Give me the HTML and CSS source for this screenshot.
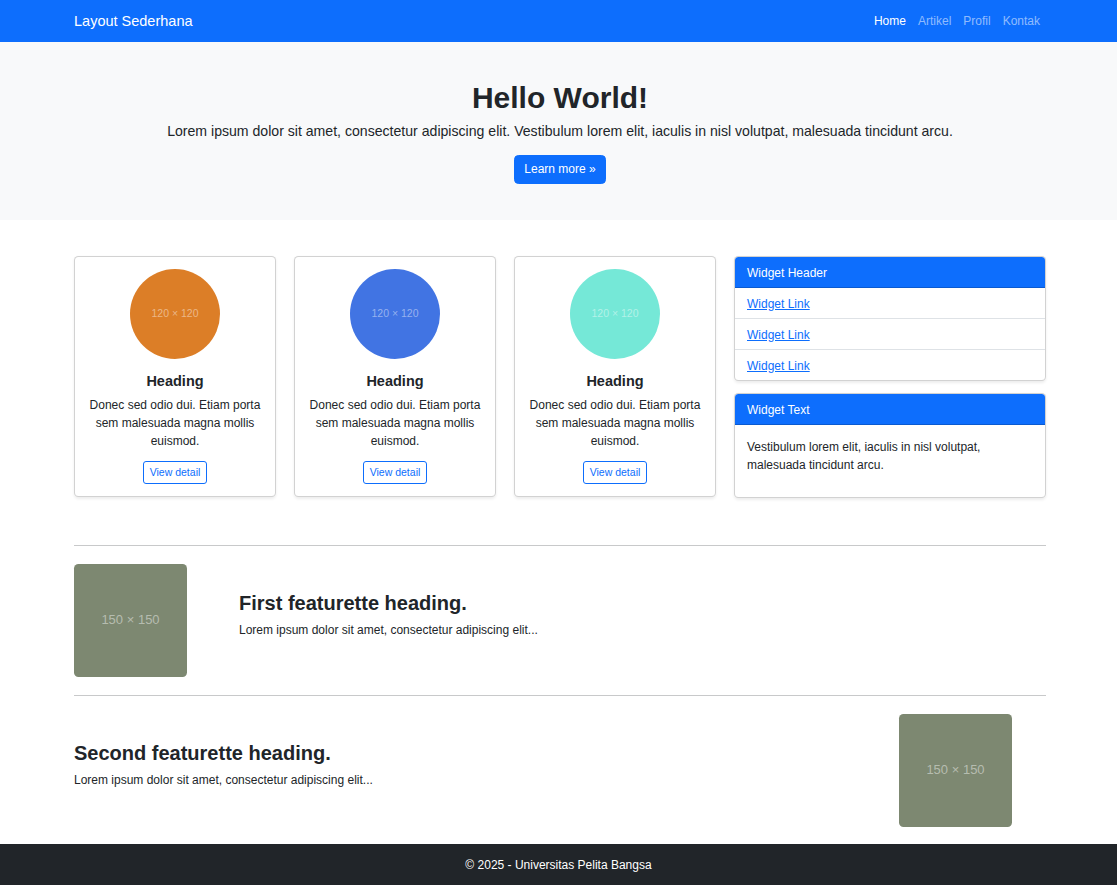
FILE: index.html
```html
<!DOCTYPE html>
<html lang="id">
<head>
<meta charset="utf-8">
<title>Layout Sederhana</title>
<link rel="stylesheet" href="styles.css">
</head>
<body>
<nav class="navbar">
  <div class="container nav-inner">
    <a class="brand" href="#">Layout Sederhana</a>
    <ul class="nav-links">
      <li><a class="nav-link active" href="#">Home</a></li>
      <li><a class="nav-link" href="#">Artikel</a></li>
      <li><a class="nav-link" href="#">Profil</a></li>
      <li><a class="nav-link" href="#">Kontak</a></li>
    </ul>
  </div>
</nav>

<header class="hero">
  <div class="container">
    <h1 class="hero-title">Hello World!</h1>
    <p class="lead">Lorem ipsum dolor sit amet, consectetur adipiscing elit. Vestibulum lorem elit, iaculis in nisl volutpat, malesuada tincidunt arcu.</p>
    <a class="btn btn-primary" href="#">Learn more »</a>
  </div>
</header>

<main class="container main">
  <div class="top-row">
    <div class="cards">
      <div class="card card-feature">
        <div class="circle circle-orange">120 × 120</div>
        <h5 class="card-heading">Heading</h5>
        <p class="card-text">Donec sed odio dui. Etiam porta sem malesuada magna mollis euismod.</p>
        <a class="btn btn-outline" href="#">View detail</a>
      </div>
      <div class="card card-feature">
        <div class="circle circle-blue">120 × 120</div>
        <h5 class="card-heading">Heading</h5>
        <p class="card-text">Donec sed odio dui. Etiam porta sem malesuada magna mollis euismod.</p>
        <a class="btn btn-outline" href="#">View detail</a>
      </div>
      <div class="card card-feature">
        <div class="circle circle-teal">120 × 120</div>
        <h5 class="card-heading">Heading</h5>
        <p class="card-text">Donec sed odio dui. Etiam porta sem malesuada magna mollis euismod.</p>
        <a class="btn btn-outline" href="#">View detail</a>
      </div>
    </div>
    <aside class="sidebar">
      <div class="card widget">
        <div class="card-header">Widget Header</div>
        <ul class="list-group">
          <li class="list-item"><a href="#">Widget Link</a></li>
          <li class="list-item"><a href="#">Widget Link</a></li>
          <li class="list-item"><a href="#">Widget Link</a></li>
        </ul>
      </div>
      <div class="card widget">
        <div class="card-header">Widget Text</div>
        <div class="card-body">
          <p>Vestibulum lorem elit, iaculis in nisl volutpat, malesuada tincidunt arcu.</p>
        </div>
      </div>
    </aside>
  </div>

  <hr class="divider divider-first">

  <section class="featurette">
    <div class="placeholder">150 × 150</div>
    <div class="feat-text">
      <h2 class="feat-heading">First featurette heading.</h2>
      <p>Lorem ipsum dolor sit amet, consectetur adipiscing elit...</p>
    </div>
  </section>

  <hr class="divider">

  <section class="featurette featurette-reverse">
    <div class="feat-text">
      <h2 class="feat-heading">Second featurette heading.</h2>
      <p>Lorem ipsum dolor sit amet, consectetur adipiscing elit...</p>
    </div>
    <div class="placeholder">150 × 150</div>
  </section>
</main>

<footer class="footer">
  <p>© 2025 - Universitas Pelita Bangsa</p>
</footer>
</body>
</html>
```
FILE: styles.css
```css
* { box-sizing: border-box; }

html, body {
  margin: 0;
  padding: 0;
}

body {
  font-family: "Liberation Sans", Arial, sans-serif;
  font-size: 12px;
  line-height: 1.5;
  color: #212529;
  background: #fff;
}

.container {
  box-sizing: content-box;
  width: 972px;
  margin: 0 auto;
  padding-left: 3px;
}

/* Navbar */
.navbar {
  background: #0d6efd;
  height: 42px;
}
.nav-inner {
  height: 42px;
  display: flex;
  align-items: center;
  justify-content: space-between;
}
.brand {
  color: #fff;
  text-decoration: none;
  font-size: 14.5px;
  line-height: 1;
}
.nav-links {
  list-style: none;
  display: flex;
  margin: 0;
  padding: 0;
}
.nav-link {
  display: block;
  padding: 0 6px;
  color: rgba(255, 255, 255, 0.55);
  text-decoration: none;
  font-size: 12px;
}
.nav-link.active { color: #fff; }

/* Hero */
.hero {
  background: #f8f9fa;
  padding: 36px 0;
  text-align: center;
}
.hero-title {
  margin: 2px 0 4px;
  font-size: 30px;
  font-weight: 700;
  line-height: 36px;
}
.lead {
  margin: 0 0 12px;
  font-size: 14.1px;
  font-weight: 300;
  line-height: 22.5px;
}

/* Buttons */
.btn {
  display: inline-block;
  text-decoration: none;
  border-radius: 4.5px;
  border: 1px solid transparent;
}
.btn-primary {
  background: #0d6efd;
  border-color: #0d6efd;
  color: #fff;
  padding: 4.5px 9px;
  font-size: 12px;
  line-height: 18px;
}
.btn-outline {
  color: #0d6efd;
  border-color: #0d6efd;
  padding: 3px 6px;
  font-size: 10.5px;
  line-height: 15px;
  border-radius: 3px;
}

/* Main */
.main { margin-top: 36px; }

.top-row {
  display: grid;
  grid-template-columns: 642px 312px;
  column-gap: 18px;
  align-items: start;
}
.cards {
  display: grid;
  grid-template-columns: repeat(3, 202px);
  column-gap: 18px;
}
.card {
  background: #fff;
  border: 1px solid rgba(0, 0, 0, 0.175);
  border-radius: 4.5px;
  box-shadow: 0 1.5px 3px rgba(0, 0, 0, 0.075);
  overflow: hidden;
}
.card-feature {
  padding: 12px;
  text-align: center;
}
.circle {
  width: 90px;
  height: 90px;
  margin: 0 auto 13px;
  border-radius: 50%;
  display: flex;
  align-items: center;
  justify-content: center;
  font-size: 10.5px;
  color: rgba(255, 255, 255, 0.45);
}
.circle-orange { background: #dc7e27; }
.circle-blue { background: #4174e3; }
.circle-teal { background: #75e8d7; }

.card-heading {
  margin: 0 0 6px;
  font-size: 14.5px;
  font-weight: 700;
  line-height: 18px;
}
.card-text {
  margin: 0 0 11px;
}

.sidebar {
  display: flex;
  flex-direction: column;
  gap: 12px;
}
.card-header {
  background: #0d6efd;
  color: #fff;
  padding: 7px 12px 5px;
  border-bottom: 1px solid rgba(0, 0, 0, 0.175);
}
.list-group {
  list-style: none;
  margin: 0;
  padding: 0;
}
.list-item {
  padding: 7px 12px 5px;
}
.list-item + .list-item {
  border-top: 1px solid #dee2e6;
}
.list-item a {
  color: #0d6efd;
  text-decoration: underline;
}
.card-body {
  padding: 13px 12px 12px;
}
.card-body p { margin: 0 0 11px; }

/* Dividers */
.divider {
  border: 0;
  border-top: 1px solid #c8c9ca;
  margin: 18px 0;
}
.divider-first { margin-top: 47px; }

/* Featurettes */
.featurette {
  display: grid;
  grid-template-columns: 147px 807px;
  column-gap: 18px;
  align-items: center;
}
.featurette-reverse {
  grid-template-columns: 807px 147px;
  margin-bottom: 17px;
}
.placeholder {
  width: 113px;
  height: 113px;
  border-radius: 4.5px;
  background: #7d8871;
  color: rgba(255, 255, 255, 0.45);
  font-size: 13px;
  display: flex;
  align-items: center;
  justify-content: center;
}
.feat-heading {
  margin: 0 0 6px;
  font-size: 20px;
  font-weight: 700;
  line-height: 24px;
}
.feat-text p { margin: 0 0 10px; }

/* Footer */
.footer {
  background: #212529;
  color: #fff;
  text-align: center;
  padding: 12px 0;
}
.footer p { margin: 0; }
```
